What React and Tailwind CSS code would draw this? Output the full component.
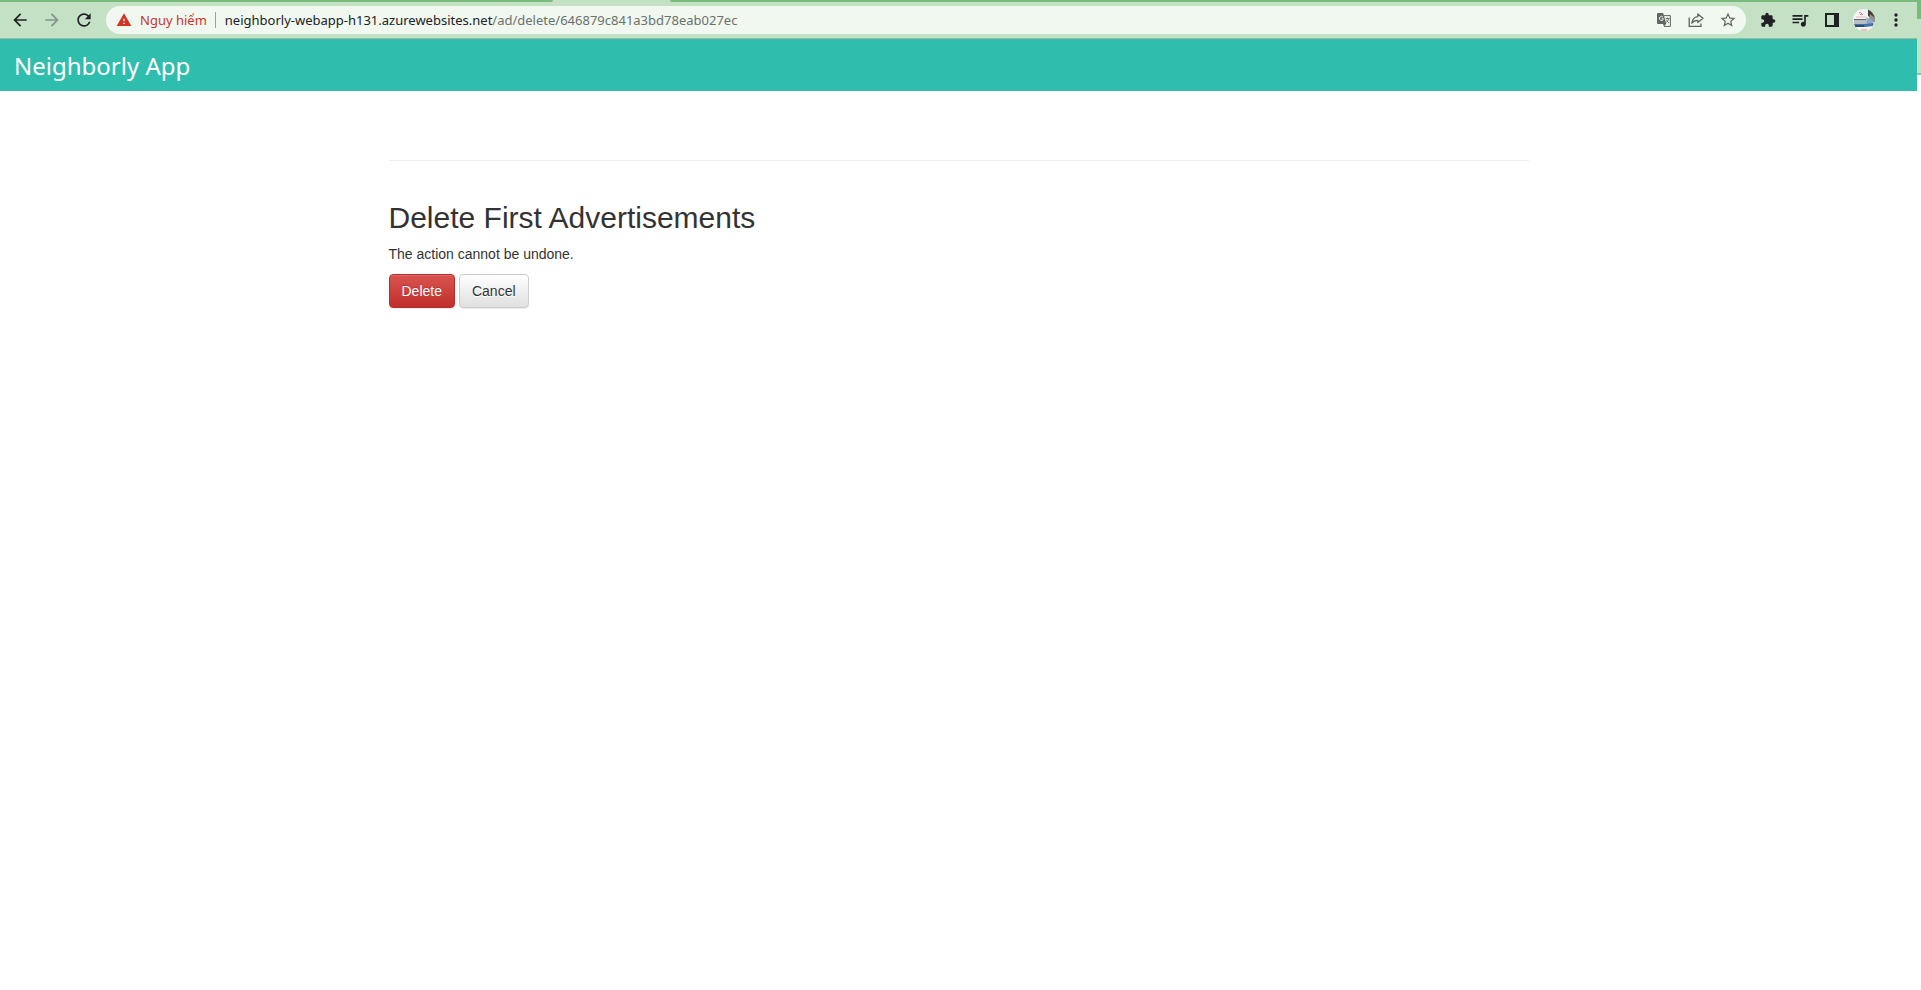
import React from "react";
import {
  MdArrowBack,
  MdArrowForward,
  MdRefresh,
  MdWarning,
  MdStarBorder,
  MdExtension,
  MdQueueMusic,
  MdMoreVert,
} from "react-icons/md";

function ToolButton({ label, className = "text-[#202124]", children }) {
  return (
    <button
      type="button"
      aria-label={label}
      className={`flex h-7 w-8 shrink-0 items-center justify-center ${className}`}
    >
      {children}
    </button>
  );
}

function TranslateIcon() {
  return (
    <svg width="14" height="14" viewBox="0 0 14 14" fill="none">
      <path d="M7 2.6H13.4V13.4H7" stroke="currentColor" strokeWidth="1" />
      <path d="M1 0H6.2L9.3 11H1Q0 11 0 10V1Q0 0 1 0Z" fill="currentColor" />
      <path d="M6 11H9L7 13.6Z" fill="currentColor" />
      <path d="M6 4.2A2 2 0 1 0 6.4 5.8H4.7" stroke="#f0f8f0" strokeWidth="1" />
      <path d="M8.6 5.6H12.6M10.6 4.4V5.6M11.8 5.6Q11.2 8.2 9.2 9.6M9.4 6.8Q10.4 8.8 12 10" stroke="currentColor" strokeWidth="0.9" />
    </svg>
  );
}

function ShareIcon() {
  return (
    <svg width="16" height="16" viewBox="0 0 16 16" fill="none" stroke="currentColor" strokeWidth="1.3">
      <path d="M1.2 5.5V14.3H13V11.5" />
      <path d="M9.8 2L15 6.3L9.8 10.6V8.3C7 8.2 5 9.2 3.8 11.2C4.2 7.6 6.4 5 9.8 4.6Z" strokeLinejoin="round" />
    </svg>
  );
}

function SidePanelIcon() {
  return (
    <svg width="14" height="14" viewBox="0 0 14 14" fill="currentColor">
      <path fillRule="evenodd" d="M0 0H14V14H0ZM2 2V12H9V2Z" />
    </svg>
  );
}

function Avatar() {
  return (
    <svg width="22" height="22" viewBox="0 0 22 22">
      <defs>
        <clipPath id="avatar-clip">
          <circle cx="11" cy="11" r="11" />
        </clipPath>
      </defs>
      <g clipPath="url(#avatar-clip)">
        <rect width="22" height="22" fill="#f6f4f5" />
        <path d="M15 0H22V11L18 9L15 7Z" fill="#453e38" />
        <path d="M17 5L22 9V14L16 10Z" fill="#90938f" />
        <path d="M6 4L8 3M7 6L9 4M8 5L10 6" stroke="#c5616a" strokeWidth="0.8" />
        <path d="M3 8H13" stroke="#e6babd" strokeWidth="1" />
        <path d="M1 10.5H13" stroke="#62656e" strokeWidth="1" />
        <path d="M1 11H14L21 14V16H1Z" fill="#b9bdc6" />
        <path d="M13 8L20 12V15H14Z" fill="#8ea8c8" />
        <path d="M1 15H12L20 14V17L12 18H2Z" fill="#4573a5" />
        <path d="M2 17H11" stroke="#263b5a" strokeWidth="1.4" />
        <path d="M8 21H14" stroke="#f0a9a9" strokeWidth="1.4" />
      </g>
    </svg>
  );
}

function BrowserBar() {
  return (
    <div className="font-['Noto_Sans',sans-serif]">
      <div className="flex h-[2px] bg-[#c5e1c5]">
        <div className="w-[553px] rounded-br-[2px] bg-[#78bb7b]" />
        <div className="w-[117px]" />
        <div className="flex-1 rounded-bl-[2px] bg-[#78bb7b]" />
      </div>
      <div className="flex h-[37px] items-center gap-[6px] border-b border-[#9fb8a0] bg-[#c5e1c5] pr-[5px] pl-1">
        <div className="flex">
          <ToolButton label="Back">
            <MdArrowBack size={20} />
          </ToolButton>
          <ToolButton label="Forward" className="text-[#85948a]">
            <MdArrowForward size={20} />
          </ToolButton>
          <ToolButton label="Reload">
            <MdRefresh size={20} />
          </ToolButton>
        </div>
        <div className="flex h-7 min-w-0 flex-1 items-center rounded-full bg-[#f0f8f0] pr-[2px] pl-[10px]">
          <MdWarning size={16} className="shrink-0 text-[#d33426]" />
          <span className="ml-2 text-[13px] leading-5 whitespace-nowrap text-[#cb3329]">Nguy hiểm</span>
          <span className="mx-2 h-4 w-px shrink-0 bg-[#98a29a]" />
          <a
            href="#"
            className="min-w-0 flex-1 truncate pl-px text-[13px] leading-5 text-[#6a706c]"
          >
            <span className="text-[#202124]">neighborly-webapp-h131.azurewebsites.net</span>
            /ad/delete/646879c841a3bd78eab027ec
          </a>
          <ToolButton label="Translate" className="text-[#5f6661]">
            <TranslateIcon />
          </ToolButton>
          <ToolButton label="Share" className="text-[#5f6661]">
            <ShareIcon />
          </ToolButton>
          <ToolButton label="Bookmark" className="text-[#5f6661]">
            <MdStarBorder size={18} />
          </ToolButton>
        </div>
        <div className="flex">
          <ToolButton label="Extensions">
            <MdExtension size={16} />
          </ToolButton>
          <ToolButton label="Media">
            <MdQueueMusic size={20} />
          </ToolButton>
          <ToolButton label="Side panel">
            <SidePanelIcon />
          </ToolButton>
          <ToolButton label="Profile">
            <Avatar />
          </ToolButton>
          <ToolButton label="Menu">
            <MdMoreVert size={20} />
          </ToolButton>
        </div>
      </div>
    </div>
  );
}

export default function App() {
  return (
    <div className="flex min-h-screen bg-white">
      <div className="min-w-0 flex-1">
        <BrowserBar />
        <header className="flex h-[52px] items-center bg-[#2fbdad] px-[14px] pt-[2px]">
          <a
            href="#"
            className="font-['Noto_Sans',sans-serif] text-2xl font-normal text-white"
          >
            Neighborly App
          </a>
        </header>
        <main className="mx-auto max-w-[1140px] pt-[69px] font-['Liberation_Sans',Arial,sans-serif] text-[#333333]">
          <hr className="border-[#eeeeee]" />
          <h2 className="mt-10 text-[30px] leading-[33px]">Delete First Advertisements</h2>
          <p className="mt-[10px] text-sm leading-5">The action cannot be undone.</p>
          <div className="mt-[10px] flex gap-1 text-sm leading-5">
            <button
              type="button"
              className="rounded-[4px] border border-[#b92c28] bg-linear-to-b from-[#d9534f] to-[#c12e2a] px-3 py-[6px] text-white shadow-[inset_0_1px_0_rgba(255,255,255,0.15),0_1px_1px_rgba(0,0,0,0.075)] [text-shadow:0_-1px_0_rgba(0,0,0,0.2)]"
            >
              Delete
            </button>
            <button
              type="button"
              className="rounded-[4px] border border-[#cccccc] bg-linear-to-b from-white to-[#e0e0e0] px-3 py-[6px] shadow-[inset_0_1px_0_rgba(255,255,255,0.15),0_1px_1px_rgba(0,0,0,0.075)] [text-shadow:0_1px_0_#fff]"
            >
              Cancel
            </button>
          </div>
        </main>
      </div>
      <div className="w-1 shrink-0">
        <div className="h-[19px] bg-[#78bb7b]" />
        <div className="h-14 border-b-2 border-[#9fb8a0] bg-[#c5e1c5]" />
      </div>
    </div>
  );
}
